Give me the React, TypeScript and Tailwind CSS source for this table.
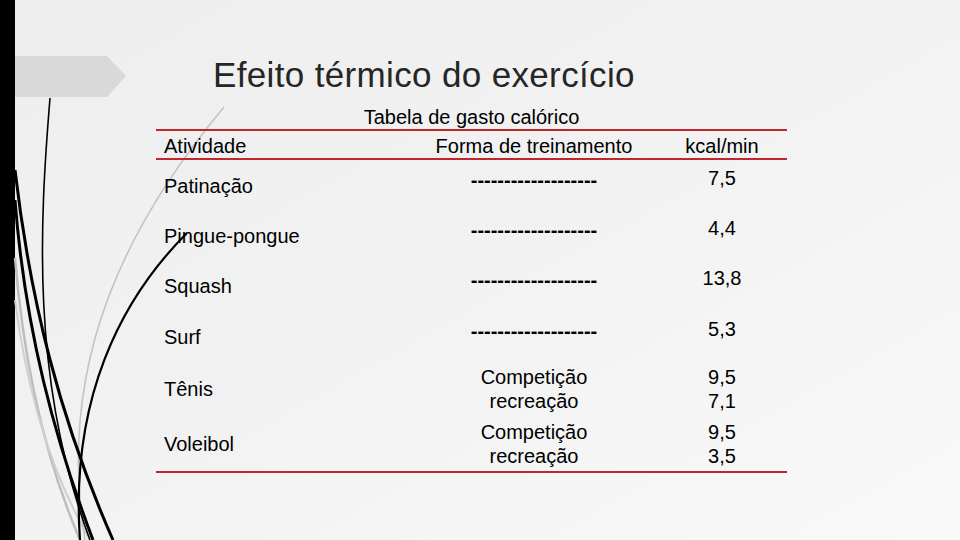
const rows = [
  { name: "Patinação", forms: ["-------------------"], vals: ["7,5"], h: "h-[51px]" },
  { name: "Pingue-pongue", forms: ["-------------------"], vals: ["4,4"], h: "h-[50px]" },
  { name: "Squash", forms: ["-------------------"], vals: ["13,8"], h: "h-[50px]" },
  { name: "Surf", forms: ["-------------------"], vals: ["5,3"], h: "h-[51px]" },
  { name: "Tênis", forms: ["Competição", "recreação"], vals: ["9,5", "7,1"], h: "h-[54px]" },
  { name: "Voleibol", forms: ["Competição", "recreação"], vals: ["9,5", "3,5"], h: "h-[55px]" },
];

function Decoration() {
  return (
    <svg
      className="absolute left-0 top-0 pointer-events-none"
      width="260"
      height="540"
      viewBox="0 0 260 540"
      fill="none"
    >
      <polygon points="15,56 107,56 126,76 107,97 15,97" fill="#d9d9d9" />
      <path d="M224 107 C 130 220, 55 360, 85 540" stroke="#c4c4c4" strokeWidth="1.6" />
      <path d="M15 258 C 25 380, 50 470, 80 540" stroke="#bdbdbd" strokeWidth="2.5" />
      <path d="M15 300 C 28 400, 55 480, 90 540" stroke="#cfcfcf" strokeWidth="2" />
      <path d="M50 98 C 40 220, 30 380, 90 540" stroke="#000" strokeWidth="1.6" />
      <path d="M187 233 C 120 300, 70 400, 80 540" stroke="#000" strokeWidth="2.2" />
      <path d="M15 170 C 30 300, 60 420, 113 540" stroke="#000" strokeWidth="3" />
      <path d="M15 200 C 25 330, 55 440, 93 540" stroke="#000" strokeWidth="3" />
    </svg>
  );
}

export default function App() {
  return (
    <div
      className="relative flex h-[540px] w-[960px] overflow-hidden bg-linear-to-br from-[#eeeeee] via-[#f2f2f2] to-[#f9f9f9] text-black"
      style={{ fontFamily: '"Liberation Sans", Arial, sans-serif' }}
    >
      <div className="h-full w-[15px] shrink-0 bg-black" />
      <Decoration />

      <div className="relative flex flex-col pt-[55px]">
        <h1 className="ml-[198px] text-[35px] leading-[40px] tracking-[0.35px] text-[#262626]">
          Efeito térmico do exercício
        </h1>

        <div className="ml-[141px] mt-[10px] w-[631px]">
          <p className="text-center text-[20px] leading-[24px]">Tabela de gasto calórico</p>

          <div className="border-y-2 border-[#c0272d] grid h-[31px] grid-cols-[255px_246px_130px] pt-[3px] text-[20px] leading-[24px]">
            <div className="pl-[8px]">Atividade</div>
            <div className="text-center">Forma de treinamento</div>
            <div className="text-center">kcal/min</div>
          </div>

          {rows.map((r) => {
            const single = r.forms.length === 1;
            return (
              <div
                key={r.name}
                className={`grid grid-cols-[255px_246px_130px] items-center text-[20px] leading-[24px] ${r.h}`}
              >
                <div className="pl-[8px]">{r.name}</div>
                <div className={`flex flex-col items-center ${single ? "pb-3 font-bold" : ""}`}>
                  {r.forms.map((f, i) => (
                    <span key={i}>{f}</span>
                  ))}
                </div>
                <div className={`flex flex-col items-center ${single ? "pb-4" : ""}`}>
                  {r.vals.map((v, i) => (
                    <span key={i}>{v}</span>
                  ))}
                </div>
              </div>
            );
          })}

          <div className="border-t-2 border-[#c0272d]" />
        </div>
      </div>
    </div>
  );
}
